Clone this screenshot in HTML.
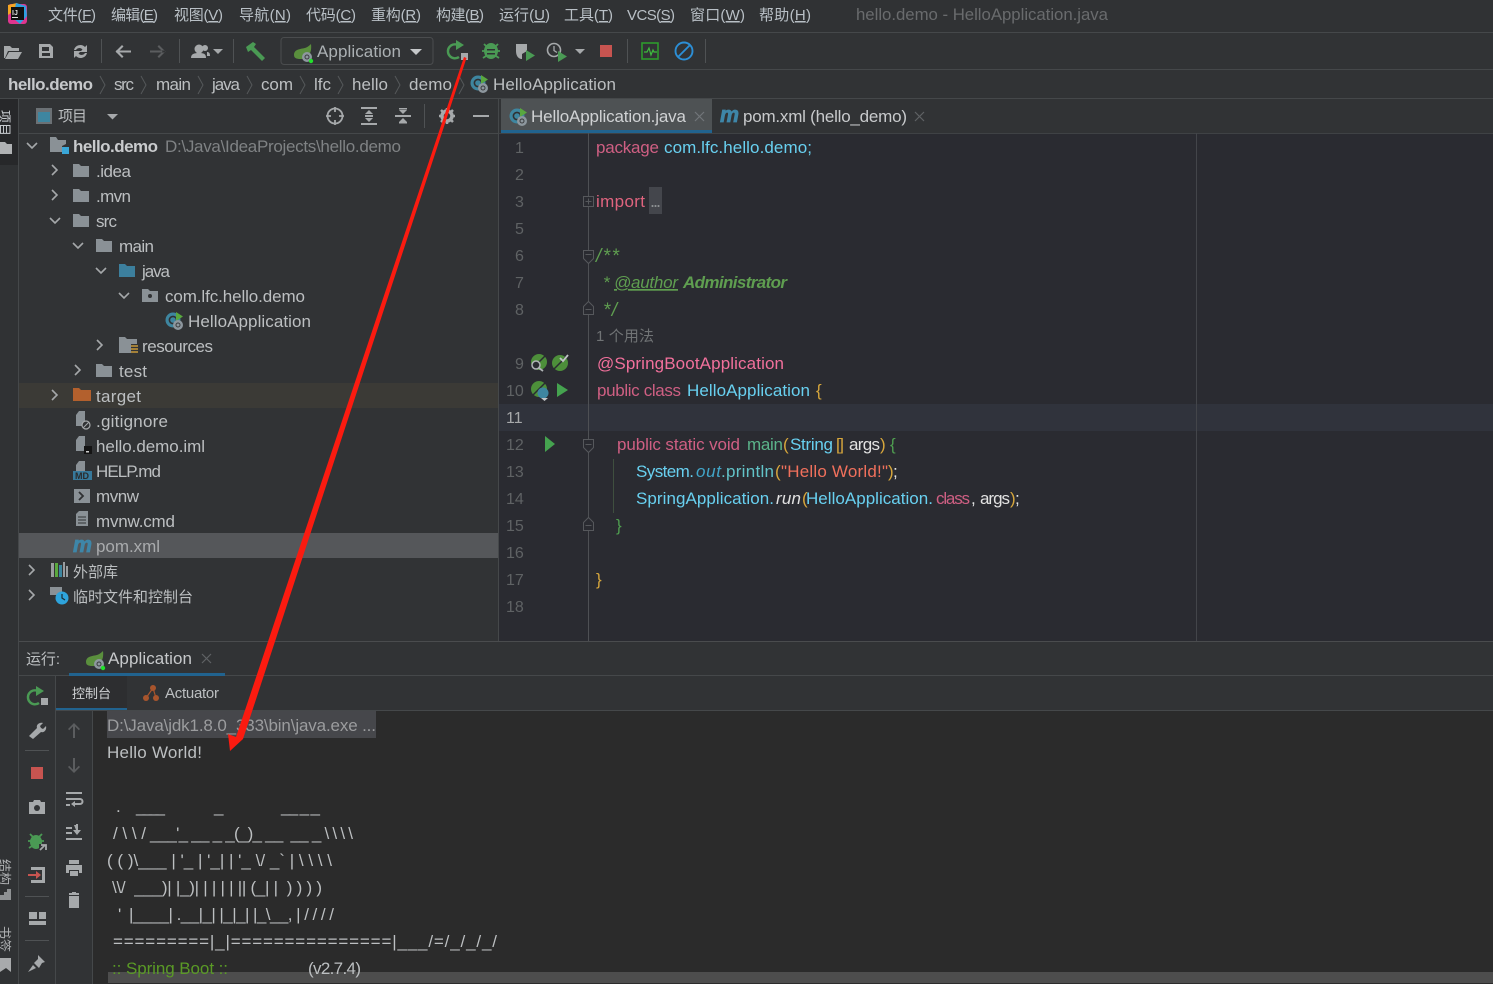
<!DOCTYPE html>
<html><head><meta charset="utf-8"><title>hello.demo - HelloApplication.java</title>
<style>
html,body{margin:0;padding:0;background:#313335;width:1493px;height:984px;overflow:hidden}
svg{display:block;position:absolute;left:0;top:0}
text{font-family:"Liberation Sans","Noto Sans CJK SC",sans-serif;font-size:17px;fill:#bcbfc1;white-space:pre}
.m{font-size:15px;fill:#b9c0c6}
.t{fill:#bdbfc1}
.c{font-size:17px}
.k{fill:#cf5f83}.n{fill:#68d0f0}.g{fill:#5f9e50;font-style:italic}.w{fill:#e2e2e2}.o{fill:#d6a63c}.ln{fill:#5f6264;font-size:16px}
.a{fill:#abb0b3;font-size:17px}
</style></head><body>
<svg width="1493" height="984" viewBox="0 0 1493 984" xmlns="http://www.w3.org/2000/svg">
<defs>
<g id="fold"><path d="M0 2h6l2 2h8v11H0z" fill="#8a9196"/></g>
<g id="chevR"><path d="M0 0l5 5-5 5" fill="none" stroke="#a5a8aa" stroke-width="1.6"/></g>
<g id="chevD"><path d="M0 0l5 5 5-5" fill="none" stroke="#a5a8aa" stroke-width="1.6"/></g>
<g id="sep"><path d="M0 0l5 9-5 9" fill="none" stroke="#55585a" stroke-width="1"/></g>
<g id="app"><circle cx="8" cy="8" r="7.5" fill="#3e86a0"/><circle cx="8" cy="8" r="3.6" fill="none" stroke="#2f3133" stroke-width="1.6"/><path d="M11 0l7 4.500-7 4.500z" fill="#59a83f"/><circle cx="13" cy="13" r="5" fill="#8d979e"/><circle cx="13" cy="13" r="2" fill="none" stroke="#3a3c3e"/></g>
<g id="spring"><path d="M1 11C1 5 8 5 12 4c3-1 5-3 6-4 1 8-2 14-9 15C5 15 1 15 1 11z" fill="#5a8f3d"/><circle cx="14" cy="13" r="5" fill="#8d979e"/><circle cx="14" cy="13" r="2" fill="none" stroke="#3a3c3e"/><circle cx="18" cy="17" r="2.200" fill="#22e02c"/></g>
<g id="mvn"><text x="0" y="0" stroke="#3e86a8" stroke-width="0.8" style="font:italic bold 22px 'Liberation Sans',sans-serif;fill:#3e86a8" textLength="19" lengthAdjust="spacingAndGlyphs">m</text></g>
<g id="file"><path d="M3 0h6v15H0V4z" fill="#8a9196"/></g>
</defs>

<!-- backgrounds -->
<rect width="1493" height="984" fill="#313335"/>
<rect x="0" y="0" width="1493" height="32" fill="#303234"/>
<rect x="0" y="32" width="1493" height="1" fill="#45484a"/>
<rect x="0" y="69" width="1493" height="1" fill="#45484a"/>
<rect x="0" y="98" width="1493" height="1" fill="#45484a"/>
<rect x="0" y="99" width="18" height="885" fill="#303234"/>
<rect x="0" y="99" width="18" height="66" fill="#27282a"/>
<rect x="18" y="99" width="1" height="885" fill="#45484a"/>
<rect x="19" y="133" width="480" height="1" fill="#45484a"/>
<rect x="19" y="383" width="480" height="25" fill="#3b3a36"/>
<rect x="19" y="533" width="480" height="25" fill="#55575a"/>
<rect x="499" y="99" width="994" height="34" fill="#313335"/>
<rect x="499" y="133" width="994" height="508" fill="#2a2b31"/>
<rect x="499" y="133" width="994" height="1" fill="#3f4245"/>
<rect x="498" y="99" width="1" height="542" fill="#45484a"/>
<rect x="501" y="99" width="211" height="34" fill="#4e5254"/>
<rect x="501" y="130" width="211" height="3" fill="#21638f"/>
<rect x="499" y="404" width="994" height="27" fill="#30333c"/>
<rect x="588" y="133" width="1" height="508" fill="#4e5054"/>
<rect x="1196" y="133" width="1" height="508" fill="#43454a"/>
<rect x="613" y="459" width="1" height="54" fill="#3f4f3f"/>
<rect x="649" y="187" width="13" height="27" fill="#44464c"/>

<!-- run panel -->
<rect x="19" y="641" width="1474" height="343" fill="#313335"/>
<rect x="19" y="641" width="1474" height="1" fill="#4a4c4e"/>
<rect x="19" y="675" width="1474" height="1" fill="#45484a"/>
<rect x="69" y="673" width="156" height="3" fill="#21638f"/>
<rect x="56" y="676" width="71" height="35" fill="#2d2e30"/>
<rect x="56" y="708" width="71" height="3" fill="#21638f"/>
<rect x="56" y="710" width="1437" height="1" fill="#45484a"/>
<rect x="93" y="711" width="1400" height="273" fill="#2b2b2b"/>
<rect x="55" y="676" width="1" height="308" fill="#45484a"/>
<rect x="92" y="711" width="1" height="273" fill="#45484a"/>
<rect x="107" y="711" width="269" height="27" fill="#46474b"/>
<rect x="108" y="972" width="1385" height="11" fill="#4d4d4d"/>

<!-- menu -->
<g>
<rect x="8" y="4" width="19" height="20" rx="3" fill="#e0358f"/><path d="M8 5l9-2 4 3-13 9z" fill="#f5a623"/><path d="M16 3l10 3 1 10-7 8-7-6z" fill="#2c9fe0"/>
<rect x="11" y="7" width="13" height="13" fill="#111"/>
<text x="12" y="15" style="font:bold 7px 'Liberation Sans',sans-serif;fill:#ddd">IJ</text><rect x="12" y="17" width="6" height="1" fill="#ddd"/>
</g>
<text class="m" x="48" y="20" textLength="48">文件(<tspan text-decoration="underline">F</tspan>)</text>
<text class="m" x="111" y="20" textLength="47">编辑(<tspan text-decoration="underline">E</tspan>)</text>
<text class="m" x="174" y="20" textLength="49">视图(<tspan text-decoration="underline">V</tspan>)</text>
<text class="m" x="239" y="20" textLength="52">导航(<tspan text-decoration="underline">N</tspan>)</text>
<text class="m" x="306" y="20" textLength="50">代码(<tspan text-decoration="underline">C</tspan>)</text>
<text class="m" x="371" y="20" textLength="50">重构(<tspan text-decoration="underline">R</tspan>)</text>
<text class="m" x="436" y="20" textLength="48">构建(<tspan text-decoration="underline">B</tspan>)</text>
<text class="m" x="499" y="20" textLength="51">运行(<tspan text-decoration="underline">U</tspan>)</text>
<text class="m" x="564" y="20" textLength="49">工具(<tspan text-decoration="underline">T</tspan>)</text>
<text class="m" x="627" y="20" textLength="48">VCS(<tspan text-decoration="underline">S</tspan>)</text>
<text class="m" x="690" y="20" textLength="55">窗口(<tspan text-decoration="underline">W</tspan>)</text>
<text class="m" x="759" y="20" textLength="52">帮助(<tspan text-decoration="underline">H</tspan>)</text>
<text x="856" y="20" textLength="252" style="font-size:16.800px;fill:#696b6d">hello.demo - HelloApplication.java</text>

<!-- toolbar -->
<g fill="#a6a9ab">
<path d="M4 46h6l2 2h7v3H8l-3 7H4z"/><path d="M9 52h13l-4 7H5z"/>
<path d="M39 44h11l3 3v11H39zM42 47v4h7v-4zM42 53v3h8v-3z" fill-rule="evenodd"/>
<path d="M74 50a6.500 6.500 0 0 1 11-3l2-2v7h-7l2.500-2.500A4 4 0 0 0 76 50zM87 53a6.500 6.500 0 0 1-11 3l-2 2v-7h7l-2.500 2.500A4 4 0 0 0 85 53z"/>
<path d="M116 50.500h15v2h-15zM122 45l1.500 1.500-5 5 5 5-1.500 1.500-6.500-6.500z" fill="#a6a9ab"/>
<path d="M150 50.500h15v2h-15zM159 45l-1.500 1.500 5 5-5 5 1.500 1.500 6.500-6.500z" fill="#5b5d5f"/>
<circle cx="199" cy="49" r="4.500"/><path d="M191 58c0-4 3-5 8-5s7 1 7 5z"/><circle cx="205" cy="48" r="3"/><path d="M207 52c2 0 3 1 3 4h-3z"/>
<path d="M213 49h10l-5 5z"/>
</g>
<rect x="101" y="39" width="1" height="24" fill="#4f5254"/><rect x="179" y="39" width="1" height="24" fill="#4f5254"/><rect x="233" y="39" width="1" height="24" fill="#4f5254"/>
<path d="M246 47l7-5 3 2-2 3 11 11-3 3-11-11-3 2z" fill="#4a9a54"/>
<rect x="281" y="37.500" width="152" height="27" rx="3" fill="none" stroke="#4a4c4e"/>
<use href="#spring" x="293" y="44"/>
<text class="a" x="317" y="57" textLength="84">Application</text>
<path d="M410 49h12l-6 6z" fill="#c5c8ca"/>
<!-- run controls -->
<g transform="translate(3,0)"><path d="M455 45a7 7 0 1 0 1 12" fill="none" stroke="#4a9a54" stroke-width="2.400"/><path d="M453 40l8 5-8 5z" fill="#4a9a54"/><rect x="458" y="53" width="7" height="7" fill="#a6a9ab"/></g>
<g fill="#4a9a54"><ellipse cx="491" cy="51" rx="7" ry="8"/><path d="M484 44l3 3M498 44l-3 3M482 51h4M496 51h4M483 58l3-2M499 58l-3-2" stroke="#4a9a54" stroke-width="1.800"/><rect x="487" y="49" width="8" height="1.500" fill="#2f3133"/><rect x="487" y="53" width="8" height="1.500" fill="#2f3133"/></g>
<path d="M516 44h11v7l-5 3v5h-1c-4-1-5-5-5-8z" fill="#a6a9ab"/><path d="M526 50l9 5.500-9 5.500z" fill="#4a9a54"/>
<circle cx="554" cy="50" r="6.500" fill="none" stroke="#a6a9ab" stroke-width="1.600"/><path d="M554 46v4.500l3 2" fill="none" stroke="#a6a9ab" stroke-width="1.300"/><path d="M558 51l9 5.500-9 5.500z" fill="#4a9a54"/>
<path d="M575 49h10l-5 5z" fill="#a6a9ab"/>
<rect x="600" y="45" width="12" height="12" fill="#c75450"/>
<rect x="627" y="39" width="1" height="24" fill="#4f5254"/>
<rect x="642" y="43" width="16" height="16" fill="none" stroke="#2d9a2d" stroke-width="1.600"/><path d="M644 52h3l2-4 2 7 2-5 1 2h3" fill="none" stroke="#3fbb3f" stroke-width="1.200"/>
<circle cx="684" cy="51" r="8.500" fill="none" stroke="#2c8fd6" stroke-width="1.900"/><path d="M678 57l12-12" stroke="#2c8fd6" stroke-width="1.900"/>
<rect x="705" y="39" width="1" height="24" fill="#4f5254"/>

<!-- breadcrumb -->
<text x="8" y="90" textLength="85" style="font-weight:bold;fill:#c6c8ca">hello.demo</text><use href="#sep" x="100" y="76"/>
<text x="114" y="90" textLength="20">src</text><use href="#sep" x="141" y="76"/>
<text x="156" y="90" textLength="35">main</text><use href="#sep" x="198" y="76"/>
<text x="212" y="90" textLength="28">java</text><use href="#sep" x="247" y="76"/>
<text x="261" y="90" textLength="32">com</text><use href="#sep" x="300" y="76"/>
<text x="314" y="90" textLength="17">lfc</text><use href="#sep" x="338" y="76"/>
<text x="352" y="90" textLength="36">hello</text><use href="#sep" x="395" y="76"/>
<text x="409" y="90" textLength="43">demo</text><use href="#sep" x="459" y="76"/>
<use href="#app" x="470" y="75"/>
<text x="493" y="90" textLength="123">HelloApplication</text>

<!-- left stripe -->
<g transform="translate(0,110) rotate(90)"><text x="0" y="0" style="font-size:13px;fill:#c8ccd0" textLength="26">项目</text></g>
<path d="M0 142h5l2 2h5v10H0z" fill="#b0b2b4"/>
<g transform="translate(0,859) rotate(90)"><text x="0" y="0" style="font-size:13px;fill:#b0b2b4" textLength="26">结构</text></g>
<path d="M0 900v-5h4v-3h3v-3h4v11z" fill="#8e9193"/>
<g transform="translate(0,926) rotate(90)"><text x="0" y="0" style="font-size:13px;fill:#b0b2b4" textLength="26">书签</text></g>
<path d="M0 958h11v14l-5-4-6 4z" fill="#a8aaac"/>

<!-- project header -->
<rect x="36" y="108" width="16" height="16" fill="#6b7175"/><rect x="38" y="112" width="12" height="10" fill="#3e86a0"/>
<text x="58" y="121" textLength="29" style="font-size:15px;fill:#bcbfc1">项目</text>
<path d="M107 114h11l-5.500 5.500z" fill="#a6a9ab"/>
<circle cx="335" cy="116" r="7.500" fill="none" stroke="#a6a9ab" stroke-width="1.800"/><path d="M335 107v5M335 120v5M326 116h5M339 116h5" stroke="#a6a9ab" stroke-width="1.800"/>
<g fill="#a6a9ab"><rect x="361" y="107" width="16" height="2"/><rect x="361" y="123" width="16" height="2"/><path d="M369 110l4 4h-8zM369 122l4-4h-8z"/><rect x="365" y="115" width="8" height="2"/>
<rect x="395" y="115" width="16" height="2"/><path d="M403 114l-4-4h8zM403 118l-4 4h8z"/><rect x="399" y="108" width="8" height="1.500"/><rect x="399" y="122" width="8" height="1.500"/></g>
<rect x="424" y="104" width="1" height="24" fill="#4f5254"/>
<circle cx="447" cy="116" r="5" fill="none" stroke="#a6a9ab" stroke-width="3.500"/><path d="M447 108v3M447 121v3M439 116h3M452 116h3M441 110l2 2M451 120l2 2M453 110l-2 2M443 120l-2 2" stroke="#a6a9ab" stroke-width="2.500"/>
<rect x="473" y="115" width="16" height="2" fill="#a6a9ab"/>

<!-- tree -->
<use href="#chevD" x="27" y="143"/>
<path d="M50 137h6l2 3h8v4l-4 2v6H50z" fill="#8a9196"/><rect x="62" y="147" width="7" height="7" fill="#3aa7d8"/>
<text x="73" y="152" textLength="85" style="font-weight:bold;fill:#c9cbcd">hello.demo</text>
<text x="165" y="152" textLength="236" style="fill:#7f8284">D:\Java\IdeaProjects\hello.demo</text>

<use href="#chevR" x="52" y="165"/><use href="#fold" x="73" y="162"/><text x="96" y="177" textLength="35">.idea</text>
<use href="#chevR" x="52" y="190"/><use href="#fold" x="73" y="187"/><text x="96" y="202" textLength="35">.mvn</text>
<use href="#chevD" x="50" y="218"/><use href="#fold" x="73" y="212"/><text x="96" y="227" textLength="21">src</text>
<use href="#chevD" x="73" y="243"/><use href="#fold" x="96" y="237"/><text x="119" y="252" textLength="35">main</text>
<use href="#chevD" x="96" y="268"/><path d="M119 264h6l2 2h8v11h-16z" fill="#3c7f9d"/><text x="142" y="277" textLength="28">java</text>
<use href="#chevD" x="119" y="293"/><use href="#fold" x="142" y="287"/><circle cx="150" cy="296" r="2" fill="#303234"/><text x="165" y="302" textLength="140">com.lfc.hello.demo</text>
<use href="#app" x="165" y="312"/><text x="188" y="327" textLength="123">HelloApplication</text>
<use href="#chevR" x="97" y="340"/><path d="M119 337h6l2 2h10v5h-6v9h-12z" fill="#8a9196"/><path d="M131 346h7M131 349h7M131 352h7" stroke="#c99a3a" stroke-width="1.500"/><text x="142" y="352" textLength="71">resources</text>
<use href="#chevR" x="75" y="365"/><use href="#fold" x="96" y="362"/><text x="119" y="377" textLength="28">test</text>
<use href="#chevR" x="52" y="390"/><path d="M73 388h6l2 2h10v11H73z" fill="#b3602d"/><text x="96" y="402" textLength="45">target</text>
<use href="#file" x="76" y="411"/><circle cx="86" cy="425" r="4" fill="#303234" stroke="#a6a9ab" stroke-width="1.200"/><path d="M83.500 427.500l5-5" stroke="#a6a9ab"/><text x="96" y="427" textLength="72">.gitignore</text>
<use href="#file" x="76" y="436"/><rect x="84" y="446" width="8" height="8" fill="#141414"/><rect x="86" y="451" width="3" height="1.500" fill="#ccc"/><text x="96" y="452" textLength="109">hello.demo.iml</text>
<use href="#file" x="76" y="461"/><rect x="73" y="471" width="19" height="9" fill="#37799b"/><text x="75" y="479" textLength="14" style="font-size:9px;font-weight:bold;fill:#2b2b2b">MD</text><text x="96" y="477" textLength="65">HELP.md</text>
<rect x="74" y="489" width="16" height="14" fill="#8a9196"/><path d="M79 492l4 4-4 4" fill="none" stroke="#2f3133" stroke-width="1.800"/><text x="96" y="502" textLength="43">mvnw</text>
<path d="M79 511h9v15H76v-12z" fill="#8a9196"/><path d="M78 517h8M78 520h8M78 523h8" stroke="#303234"/><text x="96" y="527" textLength="79">mvnw.cmd</text>
<use href="#mvn" x="73" y="552"/><text x="96" y="552" textLength="64" style="fill:#a9abad">pom.xml</text>
<use href="#chevR" x="29" y="565"/><path d="M51 563h3v14h-3z" fill="#9a9da0"/><path d="M55 563h3v14h-3z" fill="#5aa83f"/><path d="M59 565h3v12h-3z" fill="#3e86a0"/><path d="M63 562h2v15h-2zM66 566h2v11h-2z" fill="#9a9da0"/>
<text x="73" y="577" textLength="45" style="font-size:15px">外部库</text>
<use href="#chevR" x="29" y="590"/><path d="M50 587h12v8H50z" fill="#8a9196"/><circle cx="62" cy="598" r="6.500" fill="#2ea4dc"/><path d="M62 594v4l3 2" fill="none" stroke="#1c2c34" stroke-width="1.200"/>
<text x="73" y="602" textLength="120" style="font-size:15px">临时文件和控制台</text>

<!-- tabs -->
<use href="#app" x="509" y="108"/>
<text x="531" y="122" textLength="155" style="fill:#d0d2d4">HelloApplication.java</text>
<path d="M695 112l9 9M704 112l-9 9" stroke="#72767a" stroke-width="1.200"/>
<use href="#mvn" x="720" y="122"/>
<text x="743" y="122" textLength="164" style="fill:#c8cacc">pom.xml (hello_demo)</text>
<path d="M915 112l9 9M924 112l-9 9" stroke="#5f6265" stroke-width="1.200"/>

<!-- gutter icons -->
<circle cx="539" cy="362" r="8" fill="#4d8f3a"/><path d="M533 368l12-12" stroke="#2a2b31" stroke-width="1.500"/><circle cx="536" cy="365" r="4" fill="#2a2b31" stroke="#b0b4b6" stroke-width="1.500"/><path d="M539 368l4 3" stroke="#b0b4b6" stroke-width="1.800"/>
<circle cx="560" cy="363" r="8" fill="#4d8f3a"/><path d="M554 369l12-12" stroke="#2a2b31" stroke-width="1.500"/><path d="M560 358l3 3 5-6" fill="none" stroke="#c0c4c6" stroke-width="1.800"/>
<circle cx="539" cy="389" r="8" fill="#4d8f3a"/><path d="M533 395l12-12" stroke="#2a2b31" stroke-width="1.500"/><circle cx="543" cy="393" r="5.500" fill="#3e86a0"/><path d="M541 398h7l-3.500 3z" fill="#c0c4c6"/>
<path d="M557 383l11 7-11 7z" fill="#45a34f"/><path d="M545 436l10 8-10 8z" fill="#45a34f"/>

<!-- fold markers -->
<g fill="#2a2b31" stroke="#56585c">
<rect x="583.500" y="196.500" width="10" height="10"/><path d="M585.500 201.500h6M588.500 198.500v6" fill="none"/>
<path d="M583.500 250.500h10v8l-5 5-5-5z"/><path d="M585.500 254.500h6" fill="none"/>
<path d="M583.500 314.500h10v-8l-5-5-5 5z"/><path d="M585.500 309.500h6" fill="none"/>
<path d="M583.500 439.500h10v8l-5 5-5-5z"/><path d="M585.500 444.500h6" fill="none"/>
<path d="M583.500 530.500h10v-8l-5-5-5 5z"/><path d="M585.500 525.500h6" fill="none"/>
</g>

<g transform="translate(0,1)">
<!-- line numbers -->
<text class="ln" x="515" y="152">1</text><text class="ln" x="515" y="179">2</text><text class="ln" x="515" y="206">3</text><text class="ln" x="515" y="233">5</text><text class="ln" x="515" y="260">6</text><text class="ln" x="515" y="287">7</text><text class="ln" x="515" y="314">8</text><text class="ln" x="515" y="368">9</text>
<text class="ln" x="506" y="395">10</text><text class="ln" x="506" y="422" style="fill:#a6a8aa">11</text><text class="ln" x="506" y="449">12</text><text class="ln" x="506" y="476">13</text><text class="ln" x="506" y="503">14</text><text class="ln" x="506" y="530">15</text><text class="ln" x="506" y="557">16</text><text class="ln" x="506" y="584">17</text><text class="ln" x="506" y="611">18</text>

<!-- code -->
<text class="k" x="596" y="152" textLength="63">package</text>
<text class="n" x="664" y="152" textLength="148">com.lfc.hello.demo;</text>
<text class="k" x="596" y="206" textLength="49" style="fill:#e0647f">import</text>
<text x="650" y="206" textLength="11" style="fill:#8e9194;font-size:18px">...</text>
<text class="g" x="596" y="261" textLength="23" style="font-size:19px">/**</text>
<text class="g" x="603" y="287" textLength="7">*</text>
<text class="g" x="614" y="287" textLength="64" text-decoration="underline">@author</text>
<text class="g" x="683" y="287" textLength="104" style="font-weight:bold">Administrator</text>
<text class="g" x="603" y="315" textLength="14" style="font-size:19px">*/</text>
<text x="596" y="340" textLength="58" style="fill:#707375;font-size:15px">1 个用法</text>
<text x="597" y="368" textLength="187" style="fill:#f2709c">@SpringBootApplication</text>
<text class="k" x="597" y="395" textLength="84">public class</text>
<text class="n" x="687" y="395" textLength="123">HelloApplication</text>
<text class="o" x="816" y="395">{</text>
<text class="k" x="617" y="449" textLength="123">public static void</text>
<text x="747" y="449" textLength="36" style="fill:#5bb48a">main</text>
<text class="o" x="783" y="449">(</text>
<text class="n" x="790" y="449" textLength="43">String</text>
<text class="o" x="836" y="449" textLength="8">[]</text>
<text class="w" x="849" y="449" textLength="31">args</text>
<text class="o" x="880" y="449">)</text>
<text x="890" y="449" style="fill:#4f9e50">{</text>
<text class="n" x="636" y="476" textLength="58">System.</text>
<text class="n" x="696" y="476" textLength="25" style="font-style:italic;fill:#41a5c8">out</text>
<text x="721" y="476" textLength="53" style="fill:#62c3c8">.println</text>
<text class="o" x="775" y="476">(</text>
<text x="781" y="476" textLength="107" style="fill:#f0705c">"Hello World!"</text>
<text class="o" x="888" y="476">)</text>
<text class="w" x="893" y="476">;</text>
<text class="n" x="636" y="503" textLength="138">SpringApplication.</text>
<text class="w" x="776" y="503" textLength="25" style="font-style:italic">run</text>
<text class="o" x="802" y="503">(</text>
<text class="n" x="806" y="503" textLength="127">HelloApplication.</text>
<text class="k" x="936" y="503" textLength="34">class</text>
<text class="w" x="971" y="503">,</text>
<text class="w" x="980" y="503" textLength="30">args</text>
<text class="o" x="1010" y="503">)</text>
<text class="w" x="1015" y="503">;</text>
<text x="616" y="530" style="fill:#4f9e50">}</text>
<text class="o" x="596" y="584">}</text>
</g>

<!-- run panel text -->
<text x="26" y="664" textLength="34" style="font-size:15px">运行:</text>
<use href="#spring" x="85" y="651"/>
<text x="108" y="664" textLength="84" style="fill:#c6c8ca">Application</text>
<path d="M202 654l9 9M211 654l-9 9" stroke="#5f6265" stroke-width="1.200"/>
<text x="72" y="698" textLength="39" style="font-size:13px;fill:#d0d2d4">控制台</text>
<g fill="#a8552d"><circle cx="153" cy="688" r="3"/><circle cx="146" cy="698" r="3"/><circle cx="156" cy="698" r="3"/><path d="M153 688l-7 10M153 688l3 10" stroke="#a8552d" stroke-width="1.200"/></g>
<text x="165" y="698" textLength="54" style="font-size:15px">Actuator</text>

<!-- run left toolbars -->
<g transform="translate(3,0)"><path d="M35 691a7 7 0 1 0 1 12" fill="none" stroke="#4a9a54" stroke-width="2.400"/><path d="M33 686l8 5-8 5z" fill="#4a9a54"/><rect x="38" y="698" width="7" height="7" fill="#a6a9ab"/></g>
<path d="M29 736l8-8c-1-3 2-6 6-5l-3 3 1 2 2 1 3-3c1 4-2 7-5 6l-8 7z" fill="#a6a9ab"/>
<rect x="25" y="750" width="24" height="1" fill="#4f5254"/>
<rect x="31" y="767" width="12" height="12" fill="#c75450"/>
<path d="M29 802h4l1-2h6l1 2h4v12H29z" fill="#a6a9ab"/><circle cx="37" cy="808" r="3" fill="#313335"/>
<g fill="#4a9a54"><ellipse cx="36" cy="842" rx="6" ry="7"/><path d="M30 834l3 3M42 834l-3 3M28 841h4M40 841h4M29 848l3-2" stroke="#4a9a54" stroke-width="1.800"/></g><path d="M39 844h8v7h-8z" fill="#313335"/><path d="M40 850l5-5M41 845h5v5" fill="none" stroke="#a6a9ab" stroke-width="1.800"/>
<path d="M31 867h14v16H31v-3h11v-10H31z" fill="#a6a9ab"/><path d="M28 874h8v-3l5 4-5 4v-3h-8z" fill="#c75450"/>
<rect x="25" y="896" width="24" height="1" fill="#4f5254"/>
<path d="M29 912h8v7h-8zM39 912h7v7h-7zM29 921h17v4H29z" fill="#a6a9ab"/>
<rect x="25" y="940" width="24" height="1" fill="#4f5254"/>
<path d="M38 955l7 7-3 1-3 5-5-5 4-4zM33 965l3 3-8 4z" fill="#a6a9ab"/>

<g fill="#5b5d5f"><path d="M74 723l6 6-1.200 1.200-3.800-3.800V738h-2v-11.600l-3.800 3.800L68 729z"/><path d="M74 773l6-6-1.200-1.200-3.800 3.800V758h-2v11.600l-3.800-3.800L68 767z"/></g>
<g fill="#a6a9ab">
<path d="M66 792h16v2H66zM66 798h14a3 3 0 0 1 0 7h-5v2l-4-3 4-3v2h5a1 1 0 0 0 0-3H66zM66 804h4v2h-4z"/>
<path d="M66 827h6v2h-6zM66 832h6v2h-6zM66 838h16v2H66zM74 825h2v-1h2v6h3l-4 5-4-5h3z"/>
<path d="M69 860h10v4H69zM66 865h16v8h-3v-3H69v3h-3zM70 871h8v5h-8z"/>
<path d="M69 893h3v-1h4v1h3v2H69zM69 896h10v12H69z"/>
</g>

<!-- console -->
<text class="c" x="107" y="731" textLength="269" style="fill:#9b9c9e">D:\Java\jdk1.8.0_333\bin\java.exe ...</text>
<text class="c" x="107" y="758" textLength="95">Hello World!</text>
<g>
<text class="c" x="116" y="812" textLength="4">.</text>
<text class="c" x="136" y="812" textLength="29">____</text>
<text class="c" x="214" y="812" textLength="8">_</text>
<text class="c" x="281" y="812" textLength="39">__ _ _</text>
<text class="c" x="113" y="839" textLength="33">/\\/</text>
<text class="c" x="150" y="839" textLength="203">___'_ __ _ _(_)_ __  __ _ \ \ \ \</text>
<text class="c" x="107" y="866" textLength="225">( ( )\___ | '_ | '_| | '_ \/ _` | \ \ \ \</text>
<text class="c" x="112" y="893" textLength="210">\\/  ___)| |_)| | | | | || (_| |  ) ) ) )</text>
<text class="c" x="118" y="920" textLength="216">'  |____| .__|_| |_|_| |_\__, | / / / /</text>
<text class="c" x="113" y="947" textLength="384">=========|_|===============|___/=/_/_/_/</text>
<text class="c" x="112" y="974" textLength="116" style="fill:#5a9a26">:: Spring Boot ::</text>
<text class="c" x="308" y="974" textLength="53">(v2.7.4)</text>
</g>

<!-- red arrow -->
<path d="M464 57L466.500 58L243 739L230 751L228 734L236 737Z" fill="#fb1b10"/>
</svg>
</body></html>
